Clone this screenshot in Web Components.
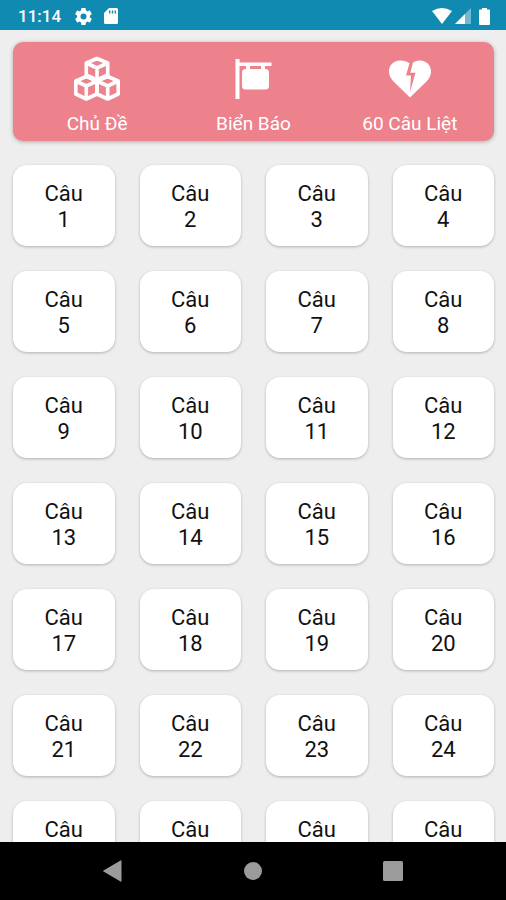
<!DOCTYPE html>
<html lang="vi">
<head>
<meta charset="utf-8">
<meta name="viewport" content="width=device-width, initial-scale=1">
<title>Câu hỏi</title>
<style>
  html, body { height: 100%; margin: 0; }
  body { font-family: Roboto, "Noto Sans", sans-serif; background: #eeeeee; }
</style>
</head>
<body>
<quiz-app></quiz-app>

<script>
const define = (name, html, setup) => {
  const template = document.createElement('template');
  template.innerHTML = html;
  customElements.define(name, class extends HTMLElement {
    constructor() {
      super();
      this.attachShadow({ mode: 'open' }).append(template.content.cloneNode(true));
    }
    connectedCallback() { if (setup) setup(this.shadowRoot, this); }
  });
};

define('status-bar', `
  <style>
    :host { display: flex; align-items: center; justify-content: space-between; height: 30px;
      box-sizing: border-box; padding: 2px 16px 0 18px; background: #118ab2; color: #fff; flex: none; }
    div { display: flex; align-items: center; }
    time { font-size: 17px; line-height: 20px; font-weight: 500; }
    .left svg { margin-left: 14px; }
    .left svg + svg { margin-left: 12px; }
    .right { gap: 3px; }
    .right svg:last-child { margin-left: 5px; }
    svg { display: block; fill: currentColor; }
  </style>
  <div class="left">
    <time>11:14</time>
    <svg width="17" height="17" viewBox="2 2 20 20" aria-hidden="true"><path d="M19.43 12.98c.04-.32.07-.64.07-.98s-.03-.66-.07-.98l2.11-1.65c.19-.15.24-.42.12-.64l-2-3.46c-.12-.22-.39-.3-.61-.22l-2.49 1c-.52-.4-1.08-.73-1.69-.98l-.38-2.65C14.46 2.18 14.25 2 14 2h-4c-.25 0-.46.18-.49.42l-.38 2.65c-.61.25-1.17.59-1.69.98l-2.49-1c-.23-.09-.49 0-.61.22l-2 3.46c-.13.22-.07.49.12.64l2.11 1.65c-.04.32-.07.65-.07.98s.03.66.07.98l-2.11 1.65c-.19.15-.24.42-.12.64l2 3.46c.12.22.39.3.61.22l2.49-1c.52.4 1.08.73 1.69.98l.38 2.65c.03.24.24.42.49.42h4c.25 0 .46-.18.49-.42l.38-2.65c.61-.25 1.17-.59 1.69-.98l2.49 1c.23.09.49 0 .61-.22l2-3.46c.12-.22.07-.49-.12-.64l-2.11-1.65zM12 15.500a3.500 3.500 0 1 1 0-7 3.500 3.500 0 0 1 0 7z"/></svg>
    <svg width="14" height="16" viewBox="0 0 14 16" aria-hidden="true"><path fill-rule="evenodd" d="M5 0h7.500q1.500 0 1.500 1.500v13q0 1.500-1.500 1.500h-11Q0 16 0 14.500V5zM5 2.500v3h1.400v-3zM7.800 2.500v3h1.400v-3zM10.600 2.500v3H12v-3z"/></svg>
  </div>
  <div class="right">
    <svg width="20" height="16" viewBox="0 0 20 16" aria-hidden="true"><path d="M0 3Q10-3 20 3L10 16z"/></svg>
    <svg width="16" height="16" viewBox="0 0 16 16" aria-hidden="true"><path opacity=".4" d="M16 0v16H0z"/><path d="M10 6v10H0z"/></svg>
    <svg width="11" height="17" viewBox="0 0 11 17" aria-hidden="true"><path d="M3 0h5v1.500H10q1 0 1 1V16q0 1-1 1H1q-1 0-1-1V2.500q0-1 1-1h2z"/></svg>
  </div>`);

define('menu-item', `
  <style>
    :host { display: block; flex: 1; }
    button { display: flex; flex-direction: column; align-items: center; width: 100%; border: 0; padding: 0;
      background: none; color: inherit; font: inherit; font-size: 19px; line-height: 22px; white-space: nowrap; }
    ::slotted(svg) { display: block; width: 50px; height: 50px; margin-bottom: 9px; }
  </style>
  <button type="button"><slot name="icon"></slot><slot></slot></button>`);

define('menu-card', `
  <style>
    :host { display: flex; padding: 12px 6px 6px; border-radius: 10px; background: #ed828c; color: #fff;
      box-shadow: 0 1px 4px rgba(0, 0, 0, .28); }
  </style>
  <slot></slot>`);

define('question-card', `
  <style>
    :host { display: block; }
    button { display: block; width: 100%; border: 0; padding: 16px 8px 13px; border-radius: 14px; background: #fff;
      color: #111; font: inherit; font-size: 22px; line-height: 26px; text-align: center;
      box-shadow: 0 1px 3px rgba(0, 0, 0, .26); }
    span { display: block; }
  </style>
  <button type="button"><span>Câu</span><span><slot></slot></span></button>`);

define('question-grid', `
  <style>
    :host { display: grid; grid-template-columns: repeat(4, 1fr); gap: 25px; }
  </style>`, (root, host) => {
  const count = Number(host.getAttribute('count'));
  for (let i = 1; i <= count; i++) {
    const card = document.createElement('question-card');
    card.textContent = i;
    root.append(card);
  }
});

define('navigation-bar', `
  <style>
    :host { display: block; flex: none; background: #000; }
    nav { display: flex; justify-content: center; gap: 92px; padding: 5px 0; }
    button { display: grid; place-items: center; width: 48px; height: 48px; padding: 0; border: 0; background: none; color: #9b9b9b; }
    svg { display: block; fill: currentColor; }
  </style>
  <nav>
    <button type="button" aria-label="Quay lại"><svg width="20" height="22" viewBox="0 0 20 22"><path d="M17.500.500Q18.500 0 18.500 1v20q0 1-1 .5L.5 11.500q-.7-.500 0-1z"/></svg></button>
    <button type="button" aria-label="Màn hình chính"><svg width="20" height="20" viewBox="0 0 20 20"><circle cx="10" cy="10" r="9"/></svg></button>
    <button type="button" aria-label="Gần đây"><svg width="20" height="20" viewBox="0 0 20 20"><rect width="20" height="20" rx="1.500"/></svg></button>
  </nav>`);

define('quiz-app', `
  <style>
    :host { display: flex; flex-direction: column; height: 100%; overflow: hidden; }
    main { flex: 1; min-height: 0; overflow-y: auto; scrollbar-width: none; padding: 12px 12px 12px 13px; }
    question-grid { margin-top: 24px; }
  </style>
  <status-bar></status-bar>
  <main>
    <menu-card>
      <menu-item>
        <svg slot="icon" viewBox="0 0 50 50" fill="none" stroke="currentColor" stroke-width="3.600" stroke-linejoin="round" aria-hidden="true">
          <path d="M25 4.500l10.700 4.500v12L25 26l-10.700-5V9z M14.300 9L25 14l10.700-5 M25 14v12"/>
          <path d="M14.300 22.500L25 27v13l-10.700 5L3.800 40V27z M3.800 27l10.500 5L25 27 M14.300 32v13"/>
          <path d="M35.700 22.500L46.200 27v13l-10.500 5L25 40V27z M25 27l10.700 5 10.500-5 M35.700 32v13"/>
        </svg>
        Chủ Đề
      </menu-item>
      <menu-item>
        <svg slot="icon" viewBox="0 0 50 50" fill="currentColor" aria-hidden="true">
          <path d="M7.500 5h4v3.500H43.500v3.500H11.500V45h-4z"/>
          <path d="M18 11h4v6h-4zM33 11h4v6h-4z"/>
          <rect x="14" y="15" width="27" height="20.500" rx="3.500"/>
        </svg>
        Biển Báo
      </menu-item>
      <menu-item>
        <svg slot="icon" viewBox="0 0 50 50" fill="currentColor" aria-hidden="true">
          <path d="M25 43.500L9 28C4 23 2.500 17 5.500 11.500C9 6 18 4.500 24.500 9.300L21 21.500H26L25 38L30.500 18.700H25.300L28 8.500C33 5 40.500 6 44 11C47.500 16.500 46.500 22 41.500 27.500z"/>
        </svg>
        60 Câu Liệt
      </menu-item>
    </menu-card>
    <question-grid count="28"></question-grid>
  </main>
  <navigation-bar></navigation-bar>`);
</script>
</body>
</html>
